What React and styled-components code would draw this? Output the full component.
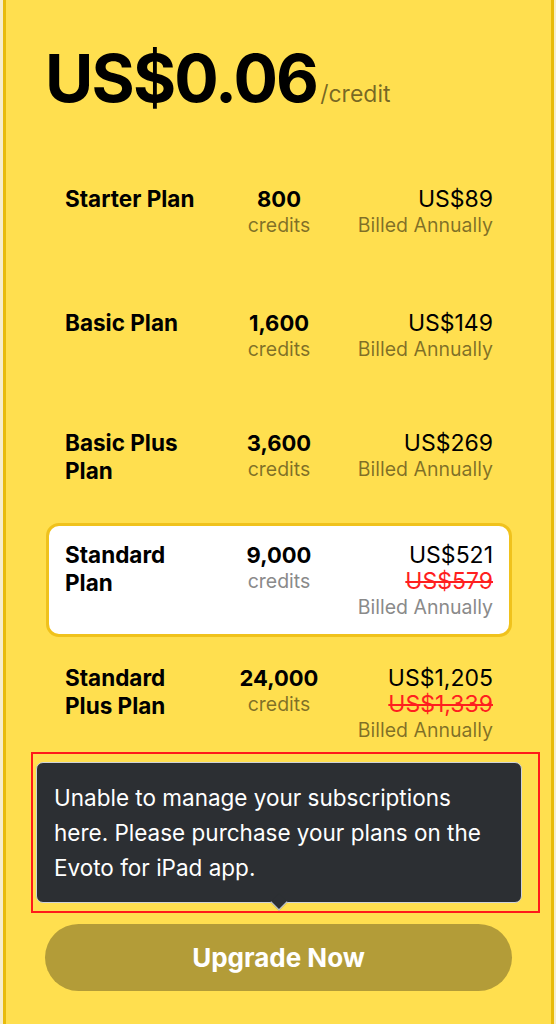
import React from "react";
import styled, { createGlobalStyle } from "styled-components";

const Global = createGlobalStyle`
  html, body { margin: 0; padding: 0; background: #f6edcb; }
  body { font-family: Inter, "Noto Sans", Arial, sans-serif; }
  * { box-sizing: border-box; }
`;

const Panel = styled.div`
  margin: 0 2px 0 3px;
  height: 1024px;
  overflow: hidden;
  background: #ffdf4f;
  border-left: 3px solid #e8bb0c;
  border-right: 3px solid #e8bb0c;
  padding: 44px 39px 0 40px;
`;

const Title = styled.div`
  display: flex;
  align-items: baseline;
  margin-left: -1px;
  line-height: 68px;
  height: 68px;
`;

const Amount = styled.span`
  font-size: 66px;
  font-weight: 700;
  color: #000;
  letter-spacing: -1.8px;
`;

const Unit = styled.span`
  font-size: 23px;
  color: rgba(0, 0, 0, 0.55);
  margin-left: 3px;
`;

const List = styled.div`
  display: flex;
  flex-direction: column;
  margin-top: 55px;
`;

const Row = styled.div`
  display: grid;
  grid-template-columns: 1fr auto 1fr;
  align-items: start;
  margin-top: ${(p) => p.$space}px;
  padding: 16px 16px 14px;
  border: 3px solid ${(p) => (p.$active ? "#f0c21c" : "transparent")};
  border-radius: 13px;
  background: ${(p) => (p.$active ? "#fff" : "transparent")};
  line-height: 26px;
`;

const Name = styled.div`
  font-size: 22.5px;
  font-weight: 700;
  color: #000;
  max-width: 140px;
  line-height: 28px;
  margin: -1px 0 -3px;
`;

const Credits = styled.div`
  display: flex;
  flex-direction: column;
  align-items: center;
`;

const Strong = styled.span`
  font-size: 22px;
  font-weight: 700;
  color: #000;
`;

const Muted = styled.span`
  font-size: 19.5px;
  color: ${(p) => (p.$light ? "#8a8a8a" : "rgba(0, 0, 0, 0.5)")};
`;

const PriceCol = styled.div`
  display: flex;
  flex-direction: column;
  align-items: flex-end;
`;

const Price = styled.span`
  font-size: 23px;
  color: #000;
`;

const OldPrice = styled.span`
  font-size: 23px;
  color: #ff1f1f;
  text-decoration: line-through;
`;

const ButtonWrap = styled.div`
  position: relative;
  margin-top: 164px;
`;

const Button = styled.button`
  display: block;
  width: 467px;
  height: 67px;
  margin-left: -1px;
  border: none;
  border-radius: 34px;
  background: #b39c38;
  color: #fff;
  font-family: Inter, "Noto Sans", Arial, sans-serif;
  font-size: 26px;
  font-weight: 700;
`;

const Highlight = styled.div`
  position: absolute;
  left: -15px;
  bottom: calc(100% + 11px);
  width: 509px;
  border: 2px solid #ff1a1a;
  padding: 8px 16px 8px 3px;
`;

const Tooltip = styled.div`
  position: relative;
  background: #2c2f33;
  border: 1px solid #cfd3d8;
  border-radius: 7px;
  padding: 17px 30px 17px 17px;
  color: #fff;
  font-size: 22.5px;
  line-height: 35px;

  &::after {
    content: "";
    position: absolute;
    left: 236px;
    bottom: -6px;
    width: 11px;
    height: 11px;
    background: #2c2f33;
    transform: rotate(45deg);
    border-right: 1px solid #cfd3d8;
    border-bottom: 1px solid #cfd3d8;
  }
`;

const plans = [
  { name: "Starter Plan", credits: "800", price: "US$89", space: 0 },
  { name: "Basic Plan", credits: "1,600", price: "US$149", space: 36 },
  { name: "Basic Plus Plan", credits: "3,600", price: "US$269", space: 32 },
  { name: "Standard Plan", credits: "9,000", price: "US$521", old: "US$579", space: 24, active: true },
  { name: "Standard Plus Plan", credits: "24,000", price: "US$1,205", old: "US$1,339", space: 9 },
];

export default function App() {
  return (
    <>
      <Global />
      <Panel>
        <Title>
          <Amount>US$0.06</Amount>
          <Unit>/credit</Unit>
        </Title>
        <List>
          {plans.map((p) => (
            <Row key={p.name} $space={p.space} $active={p.active}>
              <Name>{p.name}</Name>
              <Credits>
                <Strong>{p.credits}</Strong>
                <Muted $light={p.active}>credits</Muted>
              </Credits>
              <PriceCol>
                <Price>{p.price}</Price>
                {p.old && <OldPrice>{p.old}</OldPrice>}
                <Muted $light={p.active}>Billed Annually</Muted>
              </PriceCol>
            </Row>
          ))}
        </List>
        <ButtonWrap>
          <Highlight>
            <Tooltip>
              Unable to manage your subscriptions here. Please purchase your plans on the Evoto for iPad app.
            </Tooltip>
          </Highlight>
          <Button>Upgrade Now</Button>
        </ButtonWrap>
      </Panel>
    </>
  );
}
